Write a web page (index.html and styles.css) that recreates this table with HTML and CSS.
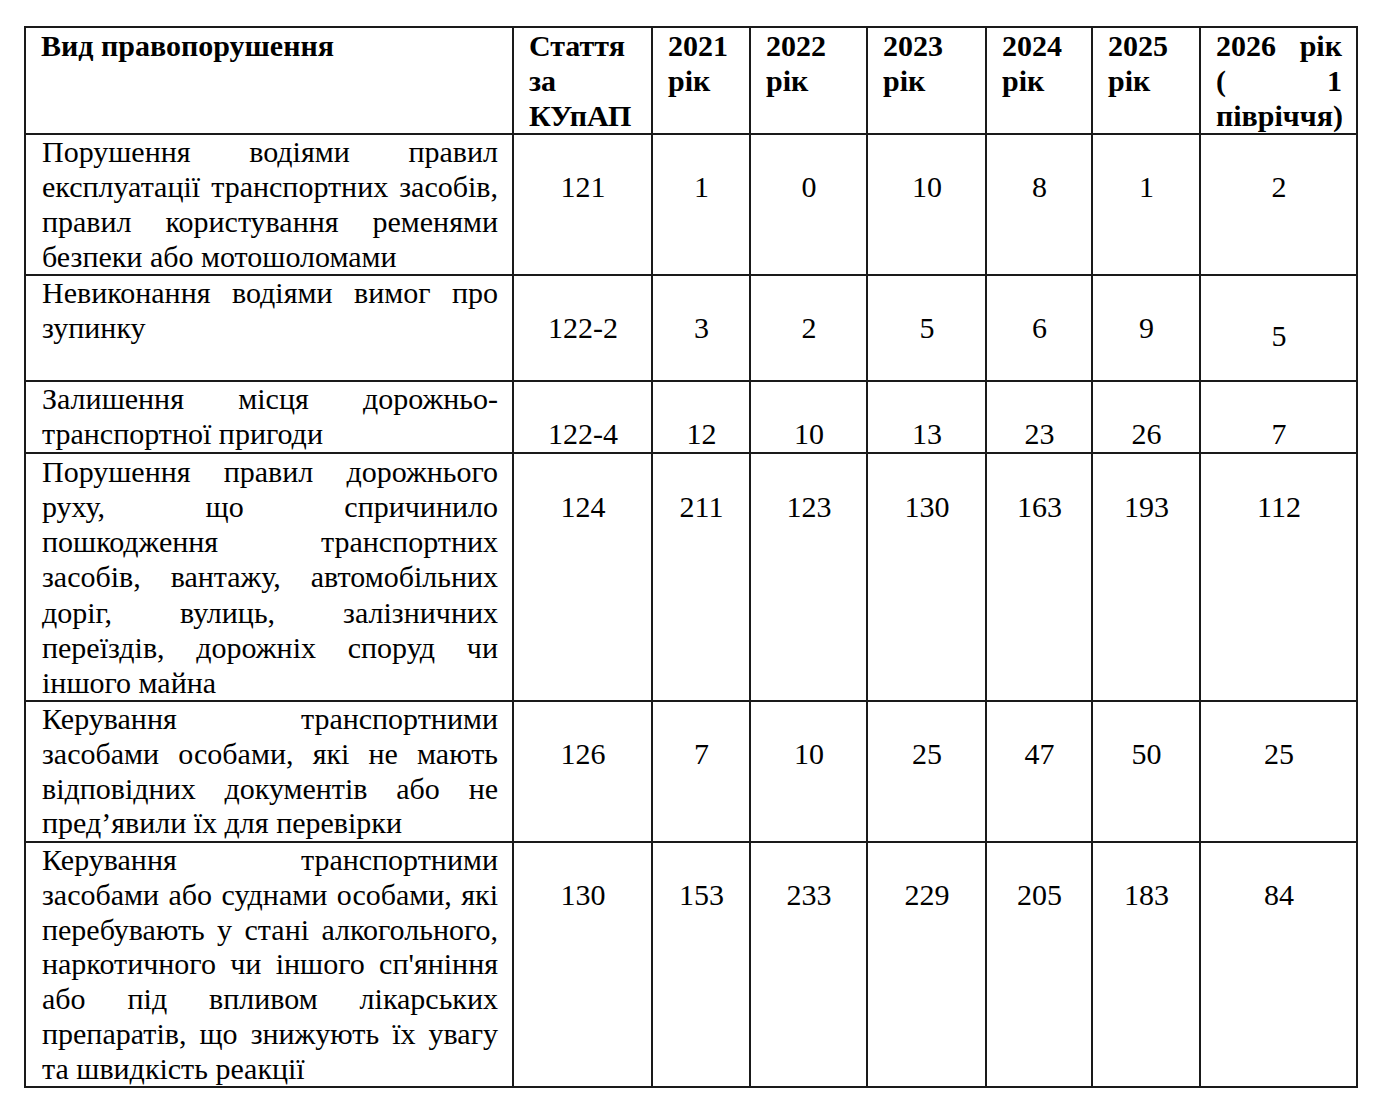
FILE: index.html
```html
<!DOCTYPE html>
<html lang="uk">
<head>
<meta charset="utf-8">
<title>Правопорушення</title>
<link rel="stylesheet" href="styles.css">
</head>
<body>
<table class="report">
  <colgroup>
    <col class="c-desc">
    <col class="c-art">
    <col class="c-y1">
    <col class="c-y2">
    <col class="c-y3">
    <col class="c-y4">
    <col class="c-y5">
    <col class="c-y6">
  </colgroup>
  <thead>
    <tr>
      <th>Вид правопорушення</th>
      <th>Стаття за КУпАП</th>
      <th>2021 рік</th>
      <th>2022 рік</th>
      <th>2023 рік</th>
      <th>2024 рік</th>
      <th>2025 рік</th>
      <th class="last-year"><span class="ln">2026 рік</span><span class="ln">( 1</span><span class="ln">півріччя)</span></th>
    </tr>
  </thead>
  <tbody>
    <tr>
      <td class="desc"><span class="ln">Порушення водіями правил</span><span class="ln">експлуатації транспортних засобів,</span><span class="ln">правил користування ременями</span><span class="ln end">безпеки або мотошоломами</span></td>
      <td class="num">121</td><td class="num">1</td><td class="num">0</td><td class="num">10</td><td class="num">8</td><td class="num">1</td><td class="num">2</td>
    </tr>
    <tr class="row-tall">
      <td class="desc"><span class="ln">Невиконання водіями вимог про</span><span class="ln end">зупинку</span></td>
      <td class="num">122-2</td><td class="num">3</td><td class="num">2</td><td class="num">5</td><td class="num">6</td><td class="num">9</td><td class="num low">5</td>
    </tr>
    <tr>
      <td class="desc"><span class="ln">Залишення місця дорожньо-</span><span class="ln end">транспортної пригоди</span></td>
      <td class="num">122-4</td><td class="num">12</td><td class="num">10</td><td class="num">13</td><td class="num">23</td><td class="num">26</td><td class="num">7</td>
    </tr>
    <tr class="row-long">
      <td class="desc"><span class="ln">Порушення правил дорожнього</span><span class="ln">руху, що спричинило</span><span class="ln">пошкодження транспортних</span><span class="ln">засобів, вантажу, автомобільних</span><span class="ln">доріг, вулиць, залізничних</span><span class="ln">переїздів, дорожніх споруд чи</span><span class="ln end">іншого майна</span></td>
      <td class="num">124</td><td class="num">211</td><td class="num">123</td><td class="num">130</td><td class="num">163</td><td class="num">193</td><td class="num">112</td>
    </tr>
    <tr>
      <td class="desc"><span class="ln">Керування транспортними</span><span class="ln">засобами особами, які не мають</span><span class="ln">відповідних документів або не</span><span class="ln end">пред’явили їх для перевірки</span></td>
      <td class="num">126</td><td class="num">7</td><td class="num">10</td><td class="num">25</td><td class="num">47</td><td class="num">50</td><td class="num">25</td>
    </tr>
    <tr>
      <td class="desc"><span class="ln">Керування транспортними</span><span class="ln">засобами або суднами особами, які</span><span class="ln">перебувають у стані алкогольного,</span><span class="ln">наркотичного чи іншого сп'яніння</span><span class="ln">або під впливом лікарських</span><span class="ln">препаратів, що знижують їх увагу</span><span class="ln end">та швидкість реакції</span></td>
      <td class="num">130</td><td class="num">153</td><td class="num">233</td><td class="num">229</td><td class="num">205</td><td class="num">183</td><td class="num">84</td>
    </tr>
  </tbody>
</table>
</body>
</html>
```

FILE: styles.css
```css
html, body {
  margin: 0;
  padding: 0;
  background: #ffffff;
}

body {
  padding: 26px 0 0 24px;
  font-family: "Liberation Serif", "Times New Roman", serif;
  color: #000000;
}

.report {
  border-collapse: collapse;
  table-layout: fixed;
  width: 1332px;
  font-size: 30px;
  line-height: 34.75px;
}

.c-desc { width: 488px; }
.c-art  { width: 139px; }
.c-y1   { width: 98px; }
.c-y2   { width: 117px; }
.c-y3   { width: 119px; }
.c-y4   { width: 106px; }
.c-y5   { width: 108px; }
.c-y6   { width: 157px; }

.report th,
.report td {
  border: 2px solid #1a1a1a;
  vertical-align: top;
  padding: 0 14px 0 15px;
}

.report th {
  font-weight: bold;
  text-align: left;
  padding-top: 1px;
}

.report td.desc {
  padding-left: 16px;
}

.ln {
  display: block;
  text-align: justify;
  text-align-last: justify;
}

.ln.end {
  text-align-last: left;
}

.report td.num {
  text-align: center;
  padding-top: 34.75px;
}

.report td.num.low {
  padding-top: 43px;
}

.row-tall {
  height: 106px;
}

.row-long td {
  line-height: 35.2px;
}

.row-long td.num {
  padding-top: 35.2px;
}
```
